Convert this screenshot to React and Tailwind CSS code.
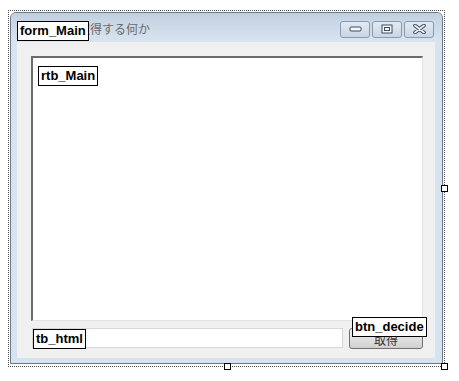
import React from "react";

const tag =
  "absolute bg-white border border-black px-[2px] leading-[18px] text-[13px] font-bold text-black font-['Liberation_Sans',Arial,sans-serif] whitespace-nowrap";

function CaptionButton({ children }) {
  return (
    <div className="w-[30px] h-[17px] rounded-[3px] border border-[#8a9bb0] bg-gradient-to-b from-[#e3eaf3] to-[#c9d6e5] flex items-center justify-center">
      {children}
    </div>
  );
}

function Handle({ className }) {
  return <div className={"absolute w-[7px] h-[7px] bg-white border border-black " + className} />;
}

export default function App() {
  return (
    <div className="relative w-[459px] h-[381px] bg-white pl-[8px] pt-[10px]">
      {/* selection rectangle of the designer */}
      <div className="relative w-[437px] h-[357px] border border-dotted border-[#505050] p-[1px]">
        <div className="w-[433px] h-[352px] rounded-t-[6px] border border-[#6a7888] bg-[#d8e3f0] flex flex-col">
          {/* title bar */}
          <div className="h-[29px] rounded-t-[5px] bg-gradient-to-b from-[#c1d0e0] to-[#d9e4f0] flex items-center pl-[67px] pr-[8px]">
            <span className="text-[12px] text-[#6a6a6a] font-['Noto_Sans_CJK_JP',sans-serif] leading-none mt-[2px]">
              取得する何か
            </span>
            <div className="ml-auto flex gap-[2px] mt-[3px]">
              <CaptionButton>
                <svg width="13" height="6" viewBox="0 0 13 6">
                  <rect x="1" y="1" width="11" height="4" rx="1" fill="#f4f7fb" stroke="#3e4b5b" />
                </svg>
              </CaptionButton>
              <CaptionButton>
                <svg width="12" height="10" viewBox="0 0 12 10">
                  <rect x="1" y="1" width="10" height="8" fill="#f4f7fb" stroke="#3e4b5b" />
                  <rect x="3.5" y="3.5" width="5" height="3" fill="none" stroke="#3e4b5b" />
                </svg>
              </CaptionButton>
              <CaptionButton>
                <svg width="13" height="10" viewBox="0 0 13 10">
                  <path d="M2 1.5 L11 8.5 M11 1.5 L2 8.5" stroke="#3e4b5b" strokeWidth="3.6" strokeLinecap="round" />
                  <path d="M2 1.5 L11 8.5 M11 1.5 L2 8.5" stroke="#f4f7fb" strokeWidth="1.6" strokeLinecap="round" />
                </svg>
              </CaptionButton>
            </div>
          </div>

          {/* client area */}
          <div className="flex-1 pl-[6px] pr-[7px] pb-[5px] flex">
            <div className="flex-1 bg-[#f0f0f0] pl-[14px] pr-[12px] pt-[14px] flex flex-col">
              <div className="h-[265px] bg-white border-t-2 border-l-2 border-t-[#6b6b6b] border-l-[#6b6b6b] border-r border-b border-r-[#e3e3e3] border-b-[#e3e3e3]" />
              <div className="mt-[7px] flex items-start">
                <div className="ml-[1px] w-[311px] h-[20px] bg-white border border-[#d7d7d7]" />
                <div className="ml-[6px] w-[74px] h-[21px] rounded-[3px] border border-[#707070] bg-gradient-to-b from-[#f3f3f3] to-[#d0d0d0] flex items-end justify-center pb-[2px] text-[12px] leading-none text-[#333] font-['Noto_Sans_CJK_JP',sans-serif]">
                  取得
                </div>
              </div>
            </div>
          </div>
        </div>

        <Handle className="right-[-4px] top-[174px]" />
        <Handle className="left-[215px] bottom-[-4px]" />
        <Handle className="right-[-4px] bottom-[-4px]" />
      </div>

      {/* component name tags */}
      <div className={tag + " left-[17px] top-[21px]"}>form_Main</div>
      <div className={tag + " left-[38px] top-[66px]"}>rtb_Main</div>
      <div className={tag + " left-[33px] top-[329px]"}>tb_html</div>
      <div className={tag + " left-[352px] top-[317px]"}>btn_decide</div>
    </div>
  );
}
